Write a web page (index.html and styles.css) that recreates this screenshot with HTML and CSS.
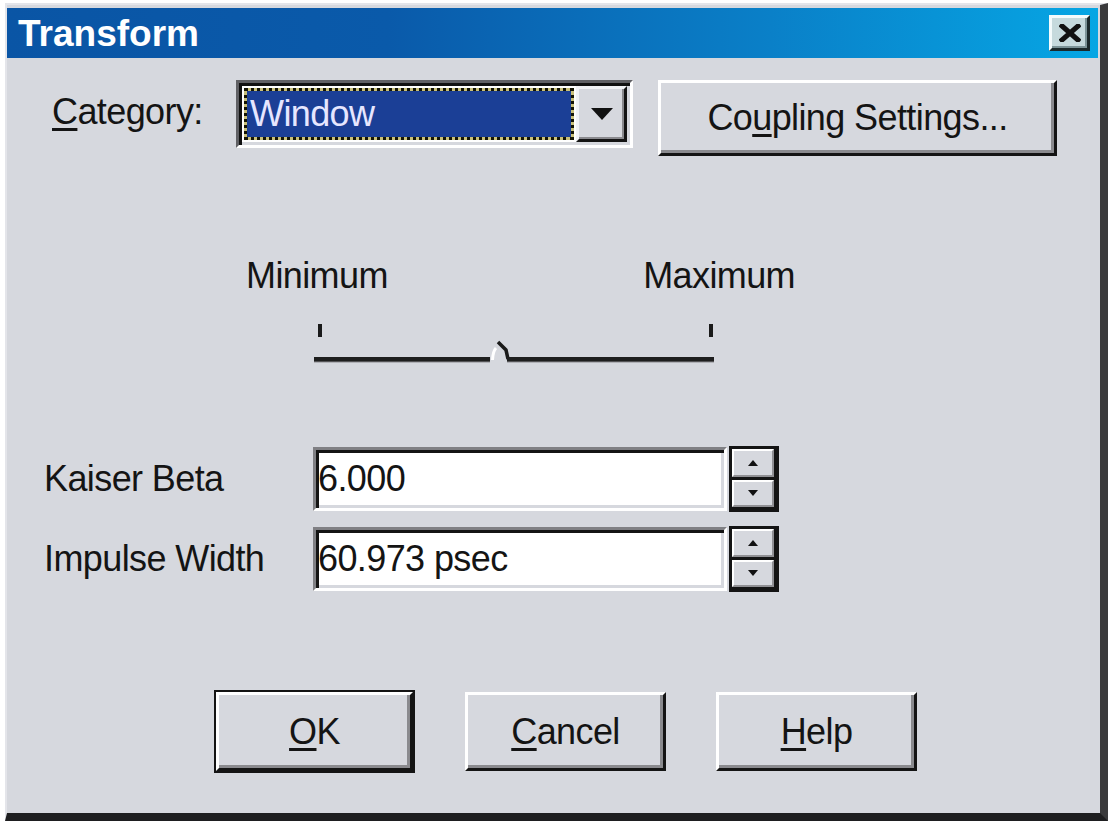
FILE: index.html
```html
<!DOCTYPE html>
<html>
<head>
<meta charset="utf-8">
<title>Transform</title>
<link rel="stylesheet" href="styles.css">
</head>
<body>
<div class="window">
  <div class="titlebar">
    <span class="title">Transform</span>
    <span class="close">
      <svg width="22" height="18" viewBox="0 0 22 18"><path d="M3 2 L19 16 M19 2 L3 16" stroke="#111" stroke-width="5" stroke-linecap="square"/></svg>
    </span>
  </div>
  <div class="content">
    <div class="row-category">
      <span class="cat-label"><u>C</u>ategory:</span>
      <div class="combo">
        <div class="combo-field">
          <div class="sel-wrap"><div class="sel">Window</div></div>
        </div>
        <div class="combo-btn">
          <svg width="22" height="12" viewBox="0 0 22 12"><path d="M0 0 H22 L11 12 Z" fill="#111"/></svg>
        </div>
      </div>
      <div class="btn coupling">Co<u>u</u>pling Settings...</div>
    </div>

    <div class="slider">
      <div class="slider-labels"><span>Minimum</span><span>Maximum</span></div>
      <svg class="track" width="405" height="45" viewBox="0 0 405 45">
        <rect x="5" y="4" width="4" height="13" fill="#1a1a1a"/>
        <rect x="396" y="4" width="4" height="13" fill="#1a1a1a"/>
        <path d="M1 39.5 H177" stroke="#1e1e1e" stroke-width="5"/>
        <path d="M1 42 H177" stroke="#8a8a8e" stroke-width="1"/>
        <path d="M179.5 40 Q180 31 183 28" stroke="#ffffff" stroke-width="3" fill="none"/>
        <path d="M185 22 L193 30 L195 39" stroke="#1a1a1a" stroke-width="3.5" fill="none"/>
        <path d="M194 39.5 H401" stroke="#1e1e1e" stroke-width="5"/>
        <path d="M194 42 H401" stroke="#8a8a8e" stroke-width="1"/>
      </svg>
    </div>

    <div class="fields">
      <div class="field-row">
        <span class="field-label">Kaiser Beta</span>
        <div class="edit">6.000</div>
        <div class="spin">
          <div class="spin-btn"><svg width="10" height="6" viewBox="0 0 10 6"><path d="M0 6 H10 L5 0 Z" fill="#111"/></svg></div>
          <div class="spin-btn"><svg width="10" height="6" viewBox="0 0 10 6"><path d="M0 0 H10 L5 6 Z" fill="#111"/></svg></div>
        </div>
      </div>
      <div class="field-row second">
        <span class="field-label">Impulse Width</span>
        <div class="edit">60.973 psec</div>
        <div class="spin">
          <div class="spin-btn"><svg width="10" height="6" viewBox="0 0 10 6"><path d="M0 6 H10 L5 0 Z" fill="#111"/></svg></div>
          <div class="spin-btn"><svg width="10" height="6" viewBox="0 0 10 6"><path d="M0 0 H10 L5 6 Z" fill="#111"/></svg></div>
        </div>
      </div>
    </div>

    <div class="buttons">
      <div class="default-frame"><div class="btn action"><u>O</u>K</div></div>
      <div class="btn action cancel"><u>C</u>ancel</div>
      <div class="btn action help"><u>H</u>elp</div>
    </div>
  </div>
</div>
</body>
</html>
```
FILE: styles.css
```css
html, body {
  margin: 0;
  padding: 0;
  background: #ffffff;
  overflow: hidden;
}

.window {
  box-sizing: border-box;
  margin: 3px 0 0 5px;
  width: 1103px;
  height: 818px;
  border-top: 2px solid #e4e5ea;
  border-left: 2px solid #e4e5ea;
  border-right: 8px solid #3a3a3c;
  border-bottom: 8px solid #1e1e20;
  padding: 3px 2px 0 0;
  background: #d6d8de;
  font-family: "Liberation Sans", Arial, sans-serif;
  font-size: 36px;
  letter-spacing: -0.6px;
  line-height: 1;
  color: #141414;
}

u {
  text-decoration-thickness: 3px;
  text-underline-offset: 4px;
}

.titlebar {
  height: 50px;
  display: flex;
  align-items: center;
  justify-content: space-between;
  padding: 0 8px 0 11px;
  background: linear-gradient(to right, #0a55a5 0%, #0a5aaa 35%, #0a80c8 70%, #06a6e4 100%);
}

.title {
  color: #ffffff;
  font-weight: bold;
  font-size: 37px;
  letter-spacing: 0;
}

.close {
  box-sizing: border-box;
  width: 41px;
  height: 36px;
  display: flex;
  align-items: center;
  justify-content: center;
  background: #c6dadd;
  border-top: 3px solid #f4fbfc;
  border-left: 3px solid #f4fbfc;
  border-right: 3px solid #1c2a2c;
  border-bottom: 3px solid #1c2a2c;
  box-shadow: inset -2px -2px 0 #7c9498;
}

.content {
  display: flex;
  flex-direction: column;
}

/* Category row */
.row-category {
  display: flex;
  align-items: flex-start;
  margin-top: 22px;
  padding-left: 45px;
}

.cat-label {
  width: 184px;
  margin-top: 14px;
}

.combo {
  box-sizing: border-box;
  width: 397px;
  height: 68px;
  display: flex;
  border-top: 3px solid #606064;
  border-left: 3px solid #606064;
  border-right: 3px solid #ffffff;
  border-bottom: 3px solid #ffffff;
  box-shadow: inset 3px 3px 0 #111111, inset -3px -3px 0 #d6d8de;
  padding: 3px;
}

.combo-field {
  flex: 1;
  background: #ffffff;
  padding: 2px;
  display: flex;
}

.sel-wrap {
  flex: 1;
  background: #c9c07a;
  display: flex;
}

.sel {
  flex: 1;
  border: 3px dotted #151505;
  background: #1b3f96;
  background-clip: padding-box;
  color: #e6e6ff;
  display: flex;
  align-items: center;
  padding-left: 3px;
}

.combo-btn {
  box-sizing: border-box;
  width: 51px;
  display: flex;
  align-items: center;
  justify-content: center;
  background: #d6d8de;
  border-top: 3px solid #f2f3f6;
  border-left: 3px solid #f2f3f6;
  border-right: 3px solid #141414;
  border-bottom: 3px solid #141414;
  box-shadow: inset -2px -2px 0 #8a8a8e;
}

.btn {
  box-sizing: border-box;
  display: flex;
  align-items: center;
  justify-content: center;
  background: #d6d8de;
  border-top: 3px solid #ffffff;
  border-left: 3px solid #ffffff;
  border-right: 3px solid #141414;
  border-bottom: 3px solid #141414;
  box-shadow: inset -3px -3px 0 #8a8a8e;
}

.coupling {
  width: 399px;
  height: 76px;
  margin-left: 25px;
}

/* Slider */
.slider {
  margin-top: 102px;
  margin-left: 239px;
  width: 549px;
  display: flex;
  flex-direction: column;
}

.slider-labels {
  display: flex;
  justify-content: space-between;
}

.track {
  display: block;
  margin-top: 26px;
  margin-left: 67px;
}

/* Fields */
.fields {
  margin-top: 81px;
  display: flex;
  flex-direction: column;
}

.field-row {
  display: flex;
  align-items: center;
  height: 66px;
  padding-left: 37px;
}

.field-row.second {
  margin-top: 14px;
}

.field-label {
  width: 269px;
}

.edit {
  box-sizing: border-box;
  width: 414px;
  height: 64px;
  background: #ffffff;
  border-top: 3px solid #808084;
  border-left: 3px solid #808084;
  border-right: 3px solid #ffffff;
  border-bottom: 3px solid #ffffff;
  box-shadow: inset 3px 3px 0 #141414, inset -3px -3px 0 #d6d8de;
  display: flex;
  align-items: center;
  padding-left: 2px;
}

.spin {
  box-sizing: border-box;
  width: 50px;
  height: 66px;
  margin-left: 2px;
  display: flex;
  flex-direction: column;
  gap: 3px;
  background: #141414;
  border: 3px solid #141414;
  border-right-width: 5px;
  border-bottom-width: 5px;
}

.spin-btn {
  flex: 1;
  display: flex;
  align-items: center;
  justify-content: center;
  background: #d6d8de;
  border-top: 2px solid #ffffff;
  border-left: 2px solid #ffffff;
  border-right: 2px solid #909094;
  border-bottom: 2px solid #909094;
}

/* Bottom buttons */
.buttons {
  margin-top: 98px;
  display: flex;
  align-items: center;
  padding-left: 207px;
  height: 83px;
}

.default-frame {
  box-sizing: border-box;
  width: 201px;
  height: 83px;
  border: 2px solid #141414;
  display: flex;
}

.default-frame .btn {
  flex: 1;
}

.action {
  width: 201px;
  height: 79px;
}

.cancel {
  margin-left: 50px;
}

.help {
  margin-left: 50px;
}
```
